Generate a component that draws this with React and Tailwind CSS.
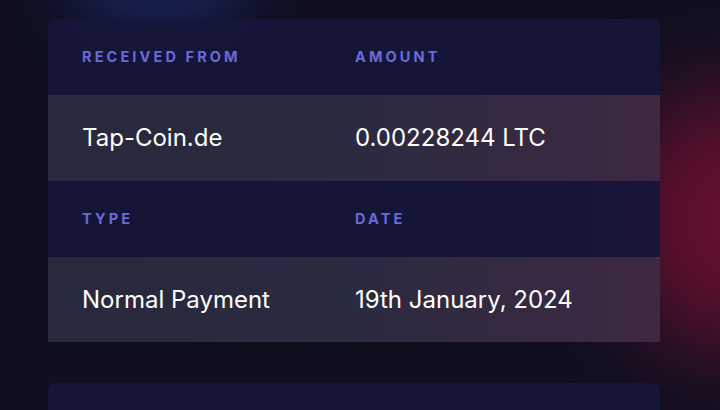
export default function App() {
  const font = { fontFamily: "Inter, 'Noto Sans', sans-serif" };
  const Label = ({ children }) => (
    <div className="h-[76px] flex items-center text-[14.5px] font-bold uppercase tracking-[0.215em] text-[#6a6ad8]">
      {children}
    </div>
  );
  return (
    <div className="relative w-[720px] h-[410px] overflow-hidden bg-[#0f0f20]" style={font}>
      <div className="absolute left-[70px] top-[-80px] w-[180px] h-[110px] rounded-full bg-[#1c2a6e] opacity-70 blur-[30px]" />
      <div className="absolute right-[-130px] top-[90px] w-[230px] h-[260px] rounded-full bg-[#7a1032] opacity-80 blur-[50px]" />
      <div className="relative pt-[19px] pl-[48px] w-[660px]">
        <div className="rounded-t-lg overflow-hidden bg-[#16163a]/95">
          <div className="grid grid-cols-[273px_1fr] pl-[34px]">
            <Label>Received From</Label>
            <Label>Amount</Label>
          </div>
          <div className="grid grid-cols-[273px_1fr] pl-[34px] h-[86px] items-center text-[24px] text-white bg-gradient-to-r from-[#29293d] via-[#2a2a40] to-[#3e2842]">
            <div>Tap-Coin.de</div>
            <div>0.00228244 LTC</div>
          </div>
          <div className="grid grid-cols-[273px_1fr] pl-[34px]">
            <Label>Type</Label>
            <Label>Date</Label>
          </div>
          <div className="grid grid-cols-[273px_1fr] pl-[34px] h-[85px] items-center text-[24px] text-white bg-gradient-to-r from-[#29293d] via-[#2a2a40] to-[#3e2842]">
            <div>Normal Payment</div>
            <div>19th January, 2024</div>
          </div>
        </div>
        <div className="mt-[41px] h-[60px] rounded-lg bg-[#16163a]/95" />
      </div>
    </div>
  );
}
